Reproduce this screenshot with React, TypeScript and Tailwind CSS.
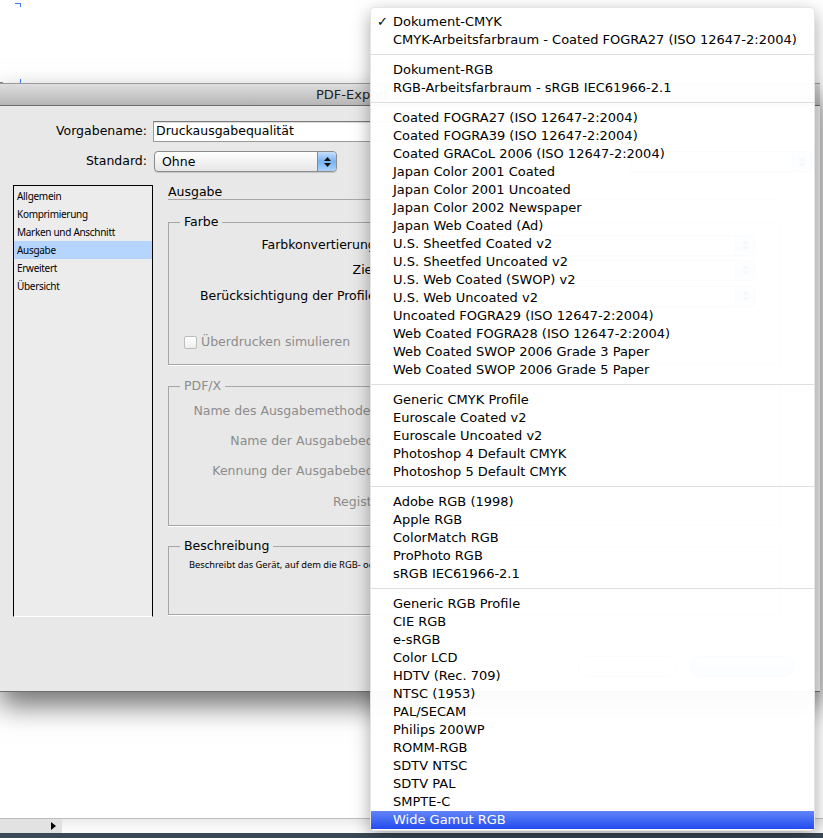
import React from "react";

const menuGroups: string[][] = [
  ["Dokument-CMYK", "CMYK-Arbeitsfarbraum - Coated FOGRA27 (ISO 12647-2:2004)"],
  ["Dokument-RGB", "RGB-Arbeitsfarbraum - sRGB IEC61966-2.1"],
  [
    "Coated FOGRA27 (ISO 12647-2:2004)",
    "Coated FOGRA39 (ISO 12647-2:2004)",
    "Coated GRACoL 2006 (ISO 12647-2:2004)",
    "Japan Color 2001 Coated",
    "Japan Color 2001 Uncoated",
    "Japan Color 2002 Newspaper",
    "Japan Web Coated (Ad)",
    "U.S. Sheetfed Coated v2",
    "U.S. Sheetfed Uncoated v2",
    "U.S. Web Coated (SWOP) v2",
    "U.S. Web Uncoated v2",
    "Uncoated FOGRA29 (ISO 12647-2:2004)",
    "Web Coated FOGRA28 (ISO 12647-2:2004)",
    "Web Coated SWOP 2006 Grade 3 Paper",
    "Web Coated SWOP 2006 Grade 5 Paper",
  ],
  [
    "Generic CMYK Profile",
    "Euroscale Coated v2",
    "Euroscale Uncoated v2",
    "Photoshop 4 Default CMYK",
    "Photoshop 5 Default CMYK",
  ],
  ["Adobe RGB (1998)", "Apple RGB", "ColorMatch RGB", "ProPhoto RGB", "sRGB IEC61966-2.1"],
  [
    "Generic RGB Profile",
    "CIE RGB",
    "e-sRGB",
    "Color LCD",
    "HDTV (Rec. 709)",
    "NTSC (1953)",
    "PAL/SECAM",
    "Philips 200WP",
    "ROMM-RGB",
    "SDTV NTSC",
    "SDTV PAL",
    "SMPTE-C",
    "Wide Gamut RGB",
  ],
];

const sections = ["Allgemein", "Komprimierung", "Marken und Anschnitt", "Ausgabe", "Erweitert", "Übersicht"];

const Stepper = () => (
  <div className="flex h-full w-[19px] flex-col items-center justify-center gap-[2px] rounded-r-[4px] border-l border-[#5a8fd0] bg-gradient-to-b from-[#c6e0fb] via-[#79b3f0] to-[#a9d2fa]">
    <svg width="7" height="4" viewBox="0 0 7 4">
      <path d="M3.5 0 L7 4 L0 4 Z" fill="#111" />
    </svg>
    <svg width="7" height="4" viewBox="0 0 7 4">
      <path d="M0 0 L7 0 L3.5 4 Z" fill="#111" />
    </svg>
  </div>
);

const MacSelect = ({ text, className }: { text?: string; className: string }) => (
  <div
    className={
      "flex h-[21px] items-center overflow-hidden rounded-[4px] border border-[#8c8c8c] bg-gradient-to-b from-white to-[#e6e6e6] shadow-[0_1px_1px_rgba(0,0,0,0.15)] " +
      className
    }
  >
    <span className="flex-1 truncate pl-[7px] text-[12.5px] leading-[19px] text-black">{text}</span>
    <Stepper />
  </div>
);

// labels run on under the popup menu; clip them at the menu's left edge
const FarbeRow = ({ label, className }: { label: string; className: string }) => (
  <div className={"flex h-[20px] items-center " + className}>
    <div className="w-[203px] overflow-hidden">
      <div className="w-[211px] whitespace-nowrap text-right text-[12.5px]">{label}</div>
    </div>
    <MacSelect className="ml-[16px] w-[367px]" />
  </div>
);

export default function App() {
  return (
    <div className="relative flex h-[838px] w-[823px] flex-col overflow-hidden bg-white font-['DejaVu_Sans',sans-serif] text-black">
      {/* desktop / document behind */}
      <div className="flex-1" />
      <div className="flex h-[15px] border-t border-[#bdbdbd]">
        <div className="flex w-[62px] items-center justify-end bg-[#e2e2e2] pr-[6px]">
          <svg width="5" height="8" viewBox="0 0 5 8">
            <path d="M0 0 L5 4 L0 8 Z" fill="#000" />
          </svg>
        </div>
        <div className="flex-1 bg-gradient-to-b from-[#ececec] to-white" />
      </div>
      <div className="h-[5px] bg-[#3b4855]" />

      {/* document frame marks */}
      <div className="absolute left-[15px] top-[3px] h-px w-[6px] bg-[#3d7cf2]" />
      <div className="absolute left-[20px] top-[3px] h-[4px] w-px bg-[#3d7cf2]" />
      <div className="absolute left-[20px] top-[79px] h-[4px] w-px bg-[#3d7cf2]" />
      <div className="absolute left-0 top-[82px] h-px w-[3px] bg-[#888]" />

      {/* dialog window */}
      <div className="absolute left-0 top-[83px] flex h-[609px] w-[820px] flex-col shadow-[0_14px_26px_rgba(0,0,0,0.55)]">
        <div className="flex h-[23px] items-center border-b border-t border-b-[#6e6e6e] border-t-[#9a9a9a] bg-gradient-to-b from-[#dedede] to-[#b6b6b6] pl-[316px]">
          <span className="text-[13px] leading-[16px] text-[#222]">PDF-Export</span>
        </div>

        <div className="flex flex-1 flex-col border-b border-[#6f6f6f] bg-[#e8e8e8]">
          <div className="mt-[15px] flex h-[21px] items-center">
            <div className="w-[147px] text-right text-[12.5px]">Vorgabename:</div>
            <div className="ml-[6px] flex h-[21px] w-[470px] items-center border border-[#9b9b9b] border-t-[#7a7a7a] bg-white pl-[2px] text-[12.5px] shadow-[inset_0_1px_1px_rgba(0,0,0,0.15)]">
              Druckausgabequalität
            </div>
          </div>

          <div className="mt-[9px] flex h-[21px] items-center">
            <div className="w-[147px] text-right text-[12.5px]">Standard:</div>
            <MacSelect text="Ohne" className="ml-[7px] w-[183px]" />
            <MacSelect className="ml-auto mr-[8px] w-[182px]" />
          </div>

          <div className="mt-[13px] flex">
            <div className="ml-[13px] h-[432px] w-[140px] border border-b-white border-l-black border-r-black border-t-black bg-[#ececec] pt-[1px]">
              {sections.map((s) => (
                <div
                  key={s}
                  className={
                    "h-[18px] pl-[3px] font-['Noto_Sans',sans-serif] text-[10px] leading-[18px] tracking-[-0.3px] " +
                    (s === "Ausgabe" ? "bg-[#b5d5ff]" : "")
                  }
                >
                  {s}
                </div>
              ))}
            </div>

            <div className="ml-[15px] flex w-[612px] flex-col">
              <div className="h-[15px] border-b border-[#a8a8a8] text-[12.5px] leading-[14px]">Ausgabe</div>

              <fieldset className="mt-[14px] h-[151px] border border-[#a6a6a6] shadow-[0_1px_0_white]">
                <legend className="ml-[11px] px-[4px] text-[12.5px] leading-[16px]">Farbe</legend>
                <FarbeRow label="Farbkonvertierung:" className="mt-[5px]" />
                <FarbeRow label="Ziel:" className="mt-[5px]" />
                <FarbeRow label="Berücksichtigung der Profile:" className="mt-[6px]" />
                <div className="mt-[26px] flex h-[20px] items-center pl-[15px]">
                  <div className="h-[13px] w-[13px] rounded-[2px] border border-[#bcbcbc] bg-gradient-to-b from-white to-[#eeeeee]" />
                  <span className="ml-[4px] text-[12.5px] text-[#8c8c8c]">Überdrucken simulieren</span>
                </div>
              </fieldset>

              <fieldset className="mt-[13px] h-[148px] border border-[#a6a6a6] shadow-[0_1px_0_white]">
                <legend className="ml-[11px] px-[4px] text-[12.5px] leading-[16px] text-[#8c8c8c]">PDF/X</legend>
                {[
                  ["Name des Ausgabemethodenprofils:", "mt-[7px]"],
                  ["Name der Ausgabebedingung:", "mt-[10px]"],
                  ["Kennung der Ausgabebedingung:", "mt-[10px]"],
                  ["Registrierung:", "mt-[11px]"],
                ].map(([label, m]) => (
                  <div key={label} className={"flex h-[20px] items-center " + m}>
                    <div className="w-[203px] overflow-hidden">
                      <div className="w-[252px] whitespace-nowrap text-right text-[12.5px] text-[#8c8c8c]">{label}</div>
                    </div>
                  </div>
                ))}
              </fieldset>

              <fieldset className="mt-[12px] h-[77px] border border-[#a6a6a6] shadow-[0_1px_0_white]">
                <legend className="ml-[11px] px-[4px] text-[12.5px] leading-[16px]">Beschreibung</legend>
                <div className="mt-[5px] w-[203px] overflow-hidden whitespace-nowrap pl-[20px] font-['Noto_Sans',sans-serif] text-[9.3px] leading-[12px]">
                  Beschreibt das Gerät, auf dem die RGB- oder CMYK-Farbwerte wiedergegeben werden.
                </div>
              </fieldset>
            </div>
          </div>

          <div className="mt-[39px] flex justify-end gap-[13px] pr-[25px]">
            <div className="h-[21px] w-[99px] rounded-full border border-[#8c8c8c] bg-gradient-to-b from-white to-[#e4e4e4]" />
            <div className="h-[21px] w-[105px] rounded-full border border-[#4a7fc6] bg-gradient-to-b from-[#c9e1fb] to-[#6aa8ee]" />
          </div>
        </div>
      </div>

      {/* popup menu */}
      <div className="absolute left-[370px] top-[7px] w-[445px] rounded-[5px] border border-black/10 bg-white/[0.97] pb-[1px] pt-[5px] shadow-[0_6px_18px_rgba(0,0,0,0.35)]">
        {menuGroups.map((group, gi) => (
          <div key={gi}>
            {gi > 0 && (
              <div className="pb-[6px] pt-[5px]">
                <div className="h-px bg-[#dedede]" />
              </div>
            )}
            {group.map((item) => {
              const selected = item === "Wide Gamut RGB";
              return (
                <div
                  key={item}
                  className={
                    "relative h-[18px] whitespace-nowrap pl-[22px] text-[13px] leading-[18px] " +
                    (selected ? "bg-gradient-to-b from-[#6384f7] to-[#2449ef] text-white" : "text-black")
                  }
                >
                  {item === "Dokument-CMYK" && <span className="absolute left-[6px] top-0">✓</span>}
                  {item}
                </div>
              );
            })}
          </div>
        ))}
      </div>
    </div>
  );
}
